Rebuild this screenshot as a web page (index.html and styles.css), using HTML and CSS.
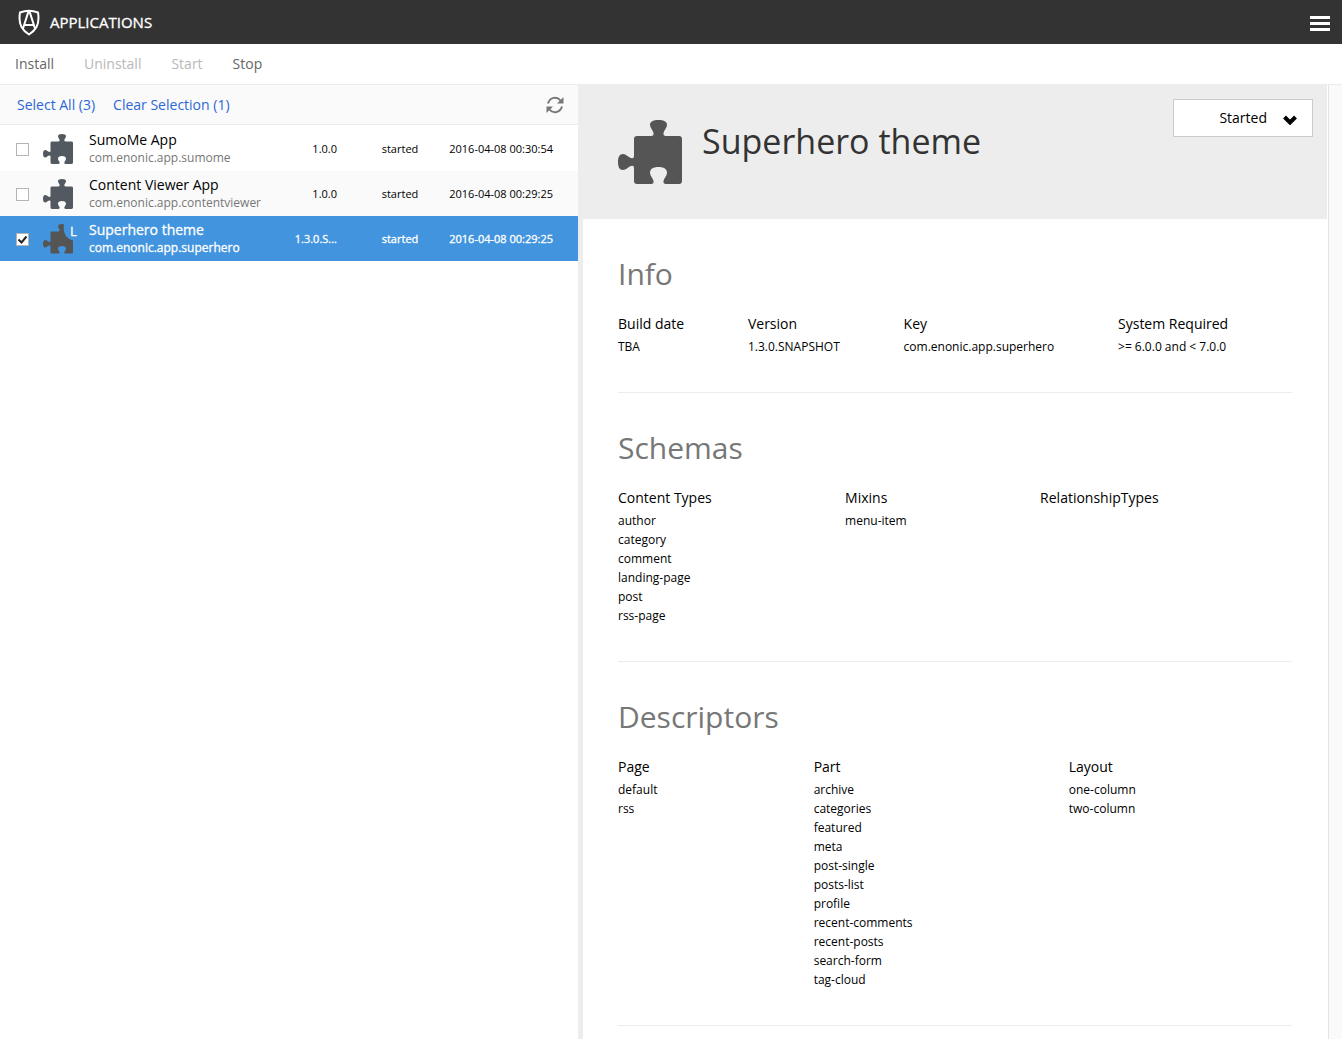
FILE: index.html
```html
<!DOCTYPE html>
<html lang="en">
<head>
<meta charset="utf-8">
<title>Applications</title>
<link rel="stylesheet" href="styles.css">
</head>
<body>
<svg class="defs" aria-hidden="true">
  <symbol id="puzzle" viewBox="0 0 64 64">
    <path d="M19 16H33Q36 16 35.500 13C35 10 32 8 32 5C32 1.500 35 0 40.500 0S49 1.500 49 5C49 8 46 10 45.500 13Q45 16 48 16H61Q64 16 64 19V61Q64 64 61 64H48Q45 64 45.500 61C46 58 49 56 49 53C49 49 46 47 40.500 47S32 49 32 53C32 56 35 58 35.500 61Q36 64 33 64H19Q16 64 16 61V48Q16 45 13 46C10 47 8 50 5 50C1.500 50 0 47 0 42S1.500 34 5 34C8 34 10 37 13 38Q16 39 16 36V19Q16 16 19 16Z"/>
  </symbol>
</svg>
<header class="app-bar">
  <svg class="logo" viewBox="0 0 22 28" aria-hidden="true">
    <path d="M2 4.500Q11 1 20 4.500Q21.500 13 18.500 19Q16 23.500 11 26.500Q6 23.500 3.500 19Q0.500 13 2 4.500Z M5 20.500L10 5Q11 3 12 5L17 20.500M7 17H15"/>
  </svg>
  <h1 class="app-title">APPLICATIONS</h1>
  <button class="menu-button" type="button" aria-label="Menu"><span></span><span></span><span></span></button>
</header>
<nav class="toolbar" aria-label="Actions">
  <button type="button">Install</button>
  <button type="button" disabled>Uninstall</button>
  <button type="button" disabled>Start</button>
  <button type="button">Stop</button>
</nav>
<main class="workspace">
  <section class="browser" aria-label="Application list">
    <div class="selection-bar">
      <a href="#all">Select All (3)</a>
      <a href="#clear">Clear Selection (1)</a>
      <button class="refresh" type="button" aria-label="Refresh">
        <svg viewBox="0 0 18 18" aria-hidden="true"><path class="arc" d="M2 7.500C4 1 11 0 14.500 4.500M16 10.500C14 17 7 18 3.500 13.500"/><path d="M17.500 1V7.500H11zM0.500 17V10.500H7z"/></svg>
      </button>
    </div>
    <table class="app-table">
      <colgroup><col class="col-check"><col class="col-icon"><col><col class="col-version"><col class="col-state"><col class="col-date"></colgroup>
      <tbody>
        <tr>
          <td class="check"><input type="checkbox" aria-label="SumoMe App"></td>
          <td class="icon"><svg class="puzzle"><use href="#puzzle"/></svg></td>
          <td><div class="name">SumoMe App</div><div class="key">com.enonic.app.sumome</div></td>
          <td class="version">1.0.0</td><td class="state">started</td><td class="date">2016-04-08 00:30:54</td>
        </tr>
        <tr>
          <td class="check"><input type="checkbox" aria-label="Content Viewer App"></td>
          <td class="icon"><svg class="puzzle"><use href="#puzzle"/></svg></td>
          <td><div class="name">Content Viewer App</div><div class="key">com.enonic.app.contentviewer</div></td>
          <td class="version">1.0.0</td><td class="state">started</td><td class="date">2016-04-08 00:29:25</td>
        </tr>
        <tr class="selected">
          <td class="check"><input type="checkbox" aria-label="Superhero theme" checked></td>
          <td class="icon"><div class="icon-box"><svg class="puzzle local"><use href="#puzzle"/></svg><span class="local-mark">L</span></div></td>
          <td><div class="name">Superhero theme</div><div class="key">com.enonic.app.superhero</div></td>
          <td class="version">1.3.0.S...</td><td class="state">started</td><td class="date">2016-04-08 00:29:25</td>
        </tr>
      </tbody>
    </table>
  </section>
  <div class="splitter"></div>
  <article class="details">
    <header class="details-head">
      <svg class="puzzle-large" aria-hidden="true"><use href="#puzzle"/></svg>
      <h2 class="details-title">Superhero theme</h2>
      <button class="state-menu" type="button">Started
        <svg viewBox="0 0 14 10" aria-hidden="true"><path d="M1.500 2L7 7.500L12.500 2"/></svg>
      </button>
    </header>
    <div class="sections">
      <section class="section">
        <h3>Info</h3>
        <div class="columns">
          <dl><dt>Build date</dt><dd>TBA</dd></dl>
          <dl><dt>Version</dt><dd>1.3.0.SNAPSHOT</dd></dl>
          <dl><dt>Key</dt><dd>com.enonic.app.superhero</dd></dl>
          <dl><dt>System Required</dt><dd>&gt;= 6.0.0 and &lt; 7.0.0</dd></dl>
        </div>
      </section>
      <section class="section">
        <h3>Schemas</h3>
        <div class="columns">
          <dl><dt>Content Types</dt><dd>author</dd><dd>category</dd><dd>comment</dd><dd>landing-page</dd><dd>post</dd><dd>rss-page</dd></dl>
          <dl><dt>Mixins</dt><dd>menu-item</dd></dl>
          <dl><dt>RelationshipTypes</dt></dl>
        </div>
      </section>
      <section class="section">
        <h3>Descriptors</h3>
        <div class="columns">
          <dl><dt>Page</dt><dd>default</dd><dd>rss</dd></dl>
          <dl><dt>Part</dt><dd>archive</dd><dd>categories</dd><dd>featured</dd><dd>meta</dd><dd>post-single</dd><dd>posts-list</dd><dd>profile</dd><dd>recent-comments</dd><dd>recent-posts</dd><dd>search-form</dd><dd>tag-cloud</dd></dl>
          <dl><dt>Layout</dt><dd>one-column</dd><dd>two-column</dd></dl>
        </div>
      </section>
    </div>
  </article>
  <div class="side-strip"></div>
</main>
</body>
</html>
```
FILE: styles.css
```css
* { box-sizing: border-box; }
body {
  margin: 0;
  min-height: 100vh;
  display: flex;
  flex-direction: column;
  background: #fff;
  color: #000;
  font: 14px/20px "Open Sans", sans-serif;
}
h1, h2, h3, dl, dd { margin: 0; font-weight: 400; }
button { padding: 0; border: 0; background: none; font: inherit; color: inherit; }
.defs { display: none; }

.app-bar {
  display: flex;
  align-items: center;
  height: 44px;
  padding: 0 12px 0 18px;
  background: #333;
  color: #fff;
}
.logo { width: 22px; height: 28px; margin-right: 10px; fill: none; stroke: #fff; stroke-width: 2; }
.app-title { font-size: 15px; -webkit-text-stroke: 0.3px #fff; }
.menu-button { display: flex; flex-direction: column; gap: 3px; margin-left: auto; padding-top: 3px; }
.menu-button span { width: 20px; height: 3px; background: #fff; }

.toolbar {
  display: flex;
  gap: 30px;
  height: 41px;
  padding: 0 15px;
  border-bottom: 1px solid #ececec;
  color: #666;
}
.toolbar button:disabled { color: #b8b8b8; }

.workspace {
  flex: 1;
  display: grid;
  grid-template-columns: minmax(0, 578fr) 5px minmax(0, 745fr) 14px;
}
.selection-bar {
  display: flex;
  align-items: center;
  gap: 18px;
  height: 40px;
  padding: 0 14px 0 17px;
  background: #fafafa;
  border-bottom: 1px solid #ececec;
}
.selection-bar a { color: #2c67d6; text-decoration: none; }
.refresh { display: flex; margin-left: auto; }
.refresh svg { width: 18px; height: 18px; fill: #777; }
.refresh .arc { fill: none; stroke: #777; stroke-width: 2; }

.app-table { width: 100%; margin-top: 1px; table-layout: fixed; border-collapse: collapse; }
.app-table td { height: 45px; padding: 0; font-size: 11px; white-space: nowrap; }
.app-table tr:nth-child(2) { background: #fafafa; }
.col-check { width: 43px; }
.col-icon { width: 46px; }
.col-version { width: 60px; }
.col-state { width: 94px; }
.col-date { width: 147px; }
.check input {
  appearance: none;
  display: block;
  width: 13px;
  height: 13px;
  margin: 1px 0 0 16px;
  border: 1px solid #b4b4b4;
  background: #fff;
}
.check input:checked {
  background: #fff url("data:image/svg+xml,%3Csvg xmlns='http://www.w3.org/2000/svg' viewBox='0 0 11 11'%3E%3Cpath d='M1.500 5.500L4.500 8.500L9.500 2.500' fill='none' stroke='%23222' stroke-width='2'/%3E%3C/svg%3E");
}
.puzzle { display: block; width: 30px; height: 30px; fill: #535960; }
.icon-box { position: relative; }
.local { clip-path: path("M0 0H21Q19 14 30 17V30H0Z"); fill: #555; }
.local-mark { position: absolute; left: 27px; top: -3px; font-size: 13px; }
.app-table .name { font-size: 14px; line-height: 18px; }
.app-table .key { font-size: 12px; line-height: 17px; color: #777; }
.app-table .version { text-align: right; }
.app-table .state { text-align: center; padding-left: 32px; }
.app-table .date { text-align: right; padding-right: 25px; }
.app-table .selected { background: #4294de; color: #fff; -webkit-text-stroke: 0.3px #fff; }
.app-table .selected .key { color: #fff; }

.splitter { background: #ededed; }
.details { padding-right: 1px; }
.details-head {
  display: flex;
  align-items: flex-start;
  height: 134px;
  padding: 14px 14px 0 35px;
  background: #ededed;
}
.puzzle-large { width: 64px; height: 64px; margin: 21px 20px 0 0; fill: #555; }
.details-title { margin-top: 18px; font-size: 34px; line-height: 48px; color: #333; }
.state-menu {
  display: flex;
  align-items: center;
  justify-content: flex-end;
  gap: 16px;
  width: 140px;
  height: 38px;
  margin-left: auto;
  padding-right: 15px;
  border: 1px solid #ccc;
  background: #fff;
}
.state-menu svg { width: 14px; height: 10px; margin-top: 3px; fill: none; stroke: #000; stroke-width: 4; }
.sections { padding: 0 35px; }
.section { padding: 35px 0 36px; border-bottom: 1px solid #ececec; }
.section h3 { font-size: 30px; line-height: 40px; color: #777; }
.columns { display: flex; margin-top: 20px; }
.columns dl { flex: 1 0 auto; }
.columns dt { line-height: 20px; margin-bottom: 3px; }
.columns dd { font-size: 12px; line-height: 19px; }
.side-strip { border-left: 1px solid #e4e4e4; background: #fafafa; }
```
